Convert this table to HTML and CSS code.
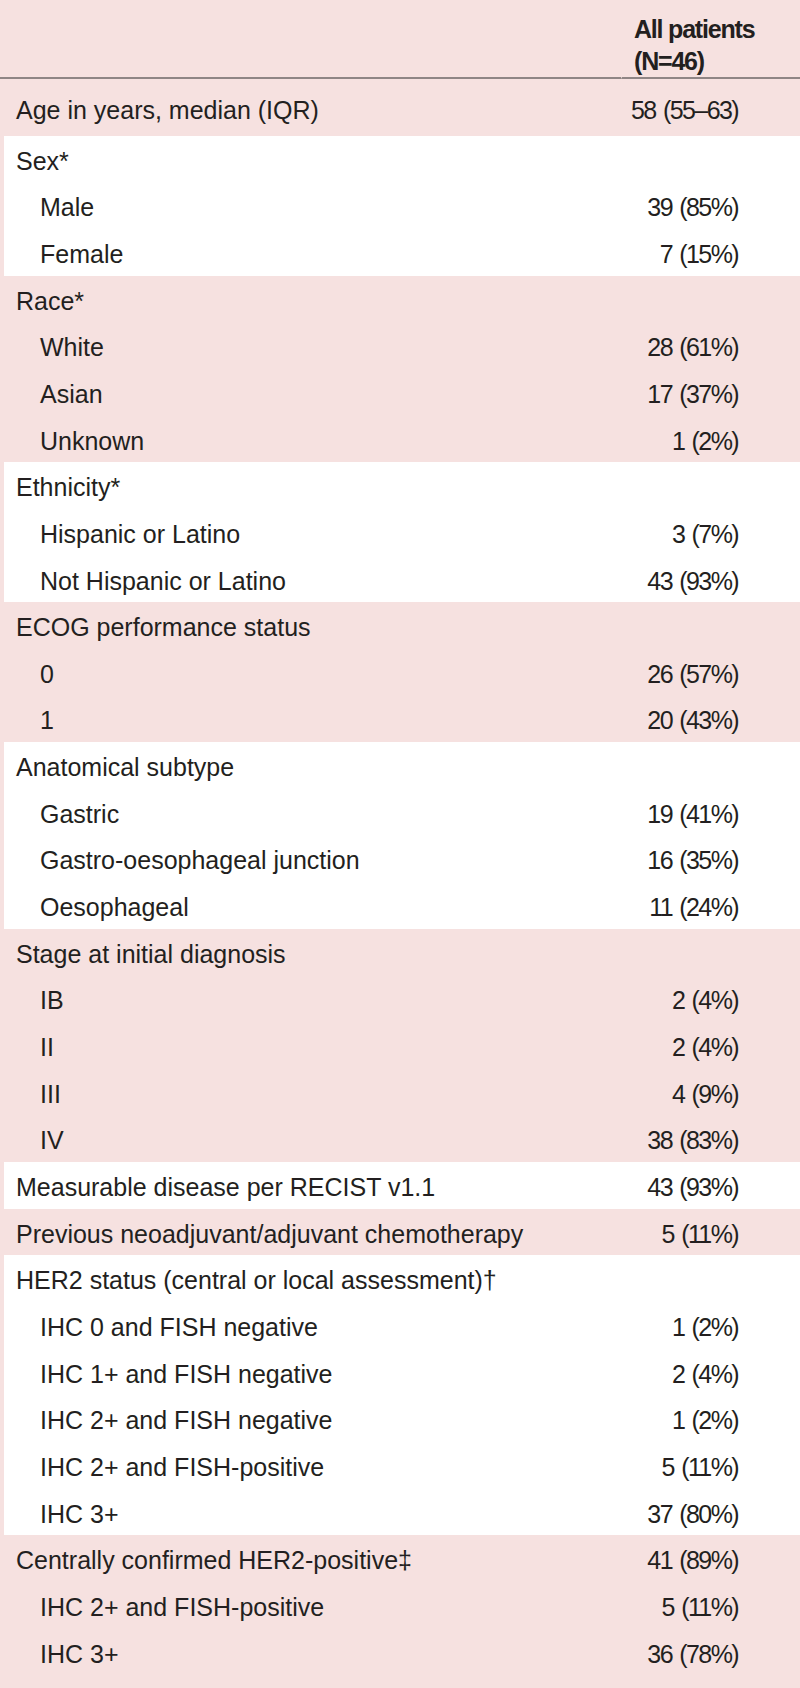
FILE: index.html
```html
<!DOCTYPE html>
<html lang="en">
<head>
<meta charset="utf-8">
<title>Baseline characteristics</title>
<link rel="stylesheet" href="styles.css">
</head>
<body>
<div class="page">
<table class="chars">
  <colgroup><col class="col-label"><col class="col-value"></colgroup>
  <thead>
    <tr><th class="h-label"></th><th class="h-value">All patients<br>(N=46)</th></tr>
  </thead>
  <tbody class="band-pink">
    <tr class="first"><td>Age in years, median (IQR)</td><td>58 (55–63)</td></tr>
  </tbody>
  <tbody class="band-white">
    <tr><td>Sex*</td><td></td></tr>
    <tr><td class="sub">Male</td><td>39 (85%)</td></tr>
    <tr><td class="sub">Female</td><td>7 (15%)</td></tr>
  </tbody>
  <tbody class="band-pink">
    <tr><td>Race*</td><td></td></tr>
    <tr><td class="sub">White</td><td>28 (61%)</td></tr>
    <tr><td class="sub">Asian</td><td>17 (37%)</td></tr>
    <tr><td class="sub">Unknown</td><td>1 (2%)</td></tr>
  </tbody>
  <tbody class="band-white">
    <tr><td>Ethnicity*</td><td></td></tr>
    <tr><td class="sub">Hispanic or Latino</td><td>3 (7%)</td></tr>
    <tr><td class="sub">Not Hispanic or Latino</td><td>43 (93%)</td></tr>
  </tbody>
  <tbody class="band-pink">
    <tr><td>ECOG performance status</td><td></td></tr>
    <tr><td class="sub">0</td><td>26 (57%)</td></tr>
    <tr><td class="sub">1</td><td>20 (43%)</td></tr>
  </tbody>
  <tbody class="band-white">
    <tr><td>Anatomical subtype</td><td></td></tr>
    <tr><td class="sub">Gastric</td><td>19 (41%)</td></tr>
    <tr><td class="sub">Gastro-oesophageal junction</td><td>16 (35%)</td></tr>
    <tr><td class="sub">Oesophageal</td><td>11 (24%)</td></tr>
  </tbody>
  <tbody class="band-pink">
    <tr><td>Stage at initial diagnosis</td><td></td></tr>
    <tr><td class="sub">IB</td><td>2 (4%)</td></tr>
    <tr><td class="sub">II</td><td>2 (4%)</td></tr>
    <tr><td class="sub">III</td><td>4 (9%)</td></tr>
    <tr><td class="sub">IV</td><td>38 (83%)</td></tr>
  </tbody>
  <tbody class="band-white">
    <tr><td>Measurable disease per RECIST v1.1</td><td>43 (93%)</td></tr>
  </tbody>
  <tbody class="band-pink">
    <tr><td>Previous neoadjuvant/adjuvant chemotherapy</td><td>5 (11%)</td></tr>
  </tbody>
  <tbody class="band-white">
    <tr><td>HER2 status (central or local assessment)†</td><td></td></tr>
    <tr><td class="sub">IHC 0 and FISH negative</td><td>1 (2%)</td></tr>
    <tr><td class="sub">IHC 1+ and FISH negative</td><td>2 (4%)</td></tr>
    <tr><td class="sub">IHC 2+ and FISH negative</td><td>1 (2%)</td></tr>
    <tr><td class="sub">IHC 2+ and FISH-positive</td><td>5 (11%)</td></tr>
    <tr><td class="sub">IHC 3+</td><td>37 (80%)</td></tr>
  </tbody>
  <tbody class="band-pink">
    <tr><td>Centrally confirmed HER2-positive‡</td><td>41 (89%)</td></tr>
    <tr><td class="sub">IHC 2+ and FISH-positive</td><td>5 (11%)</td></tr>
    <tr><td class="sub">IHC 3+</td><td>36 (78%)</td></tr>
  </tbody>
</table>
</div>
</body>
</html>
```
FILE: styles.css
```css
html, body {
  margin: 0;
  padding: 0;
  background: #f6e1e0;
}

.page {
  width: 800px;
  min-height: 1688px;
  background: #f6e1e0;
  color: #231f20;
  font-family: "Liberation Sans Narrow", "Liberation Sans", "Open Sans", sans-serif;
  font-stretch: condensed;
  font-size: 25px;
}

.chars {
  width: 800px;
  border-collapse: separate;
  border-spacing: 0;
  table-layout: fixed;
}

.col-label { width: 622px; }
.col-value { width: 178px; }

.chars th {
  font-weight: bold;
  text-align: left;
  vertical-align: bottom;
  line-height: 32px;
  padding: 13px 0 0 0;
  letter-spacing: -1.2px;
  border-bottom: 2px solid #8f8585;
}

.chars th.h-label {
  border-right: 1px solid #f6e1e0;
}

.chars th.h-value {
  padding-left: 12px;
}

.chars td {
  line-height: 30px;
  padding: 10px 0 6.67px 0;
  white-space: nowrap;
}

.chars td:first-child {
  border-left: 4px solid #f6e1e0;
  padding-left: 12px;
}

.chars td.sub {
  padding-left: 36px;
}

.chars td:last-child {
  text-align: right;
  padding-right: 62px;
  letter-spacing: -1.6px;
  word-spacing: 2px;
}

.chars tr.first td {
  padding-top: 15.8px;
  padding-bottom: 10.8px;
}

.band-pink td { background: #f6e1e0; }
.band-white td { background: #ffffff; }
```
